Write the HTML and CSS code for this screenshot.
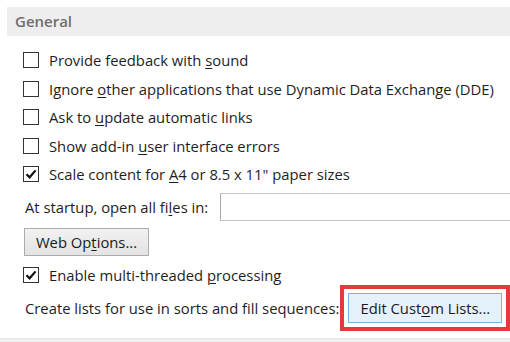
FILE: index.html
```html
<!DOCTYPE html>
<html>
<head>
<meta charset="utf-8">
<link rel="stylesheet" href="styles.css">
</head>
<body>
<div class="page">
  <div class="section-head">General</div>
  <div class="checks">
    <div class="row check-row"><span class="box"></span><span class="label">Provide feedback with <u>s</u>ound</span></div>
    <div class="row check-row"><span class="box"></span><span class="label">Ignore <u>o</u>ther applications that use Dynamic Data Exchange (DDE)</span></div>
    <div class="row check-row"><span class="box"></span><span class="label">Ask to <u>u</u>pdate automatic links</span></div>
    <div class="row check-row"><span class="box"></span><span class="label">Show add-in <u>u</u>ser interface errors</span></div>
    <div class="row check-row"><span class="box checked"><svg viewBox="0 0 14 14" width="14" height="14"><path d="M2.5 7.2 L5.6 10.3 L11.6 3.4" fill="none" stroke="#111" stroke-width="2.2"/></svg></span><span class="label">Scale content for <u>A</u>4 or 8.5 x 11" paper sizes</span></div>
  </div>
  <div class="row startup-row"><span class="plain">At startup, open all fi<u>l</u>es in:</span><span class="textbox"></span></div>
  <div class="btn-row"><span class="btn">Web Op<u>t</u>ions...</span></div>
  <div class="row check-row enable-row"><span class="box checked"><svg viewBox="0 0 14 14" width="14" height="14"><path d="M2.5 7.2 L5.6 10.3 L11.6 3.4" fill="none" stroke="#111" stroke-width="2.2"/></svg></span><span class="label">Enable multi-threaded <u>p</u>rocessing</span></div>
  <div class="row lists-row"><span class="plain">Create lists for use in sorts and fill sequences:</span><span class="btn btn-hot">Edit Cust<u>o</u>m Lists...</span></div>
  <div class="footer-band"></div>
</div>
</body>
</html>
```
FILE: styles.css
```css
html, body {
  margin: 0;
  padding: 0;
  background: #ffffff;
  overflow: hidden;
}
body {
  width: 510px;
  height: 342px;
  font-family: "Open Sans", "Noto Sans", "Liberation Sans", sans-serif;
  font-size: 14.8px;
  color: #1e1e1e;
}
.page {
  padding-top: 7px;
}
.section-head {
  margin-left: 7px;
  height: 29px;
  line-height: 29px;
  background: #eeeeee;
  padding-left: 8px;
  color: #6e6e6e;
  font-weight: 600;
  font-size: 15px;
}
.checks {
  margin-top: 9.75px;
}
.row {
  display: flex;
  align-items: center;
  white-space: nowrap;
}
.check-row {
  height: 28.5px;
  padding-left: 23px;
}
.box {
  box-sizing: border-box;
  width: 16px;
  height: 16px;
  border: 1px solid #333333;
  background: #ffffff;
  display: flex;
  align-items: center;
  justify-content: center;
  flex: none;
}
.label {
  margin-left: 10px;
}
u {
  text-decoration-thickness: 1px;
  text-underline-offset: 2px;
}
.startup-row {
  margin-top: 4.75px;
  height: 28px;
  padding-left: 25px;
}
.textbox {
  box-sizing: border-box;
  margin-left: auto;
  width: 300px;
  flex: none;
  height: 28px;
  border: 1px solid #c6c6c6;
  border-left-color: #a9a9a9;
  background: #ffffff;
  margin-right: -10px;
}
.startup-row .plain {
  width: 195px;
}
.btn-row {
  margin-top: 7px;
  padding-left: 24px;
  display: flex;
}
.btn {
  box-sizing: border-box;
  display: flex;
  align-items: center;
  justify-content: center;
  height: 28px;
  width: 125px;
  border: 1px solid #adadad;
  background: linear-gradient(#f1f1f1, #e3e3e3);
  color: #1a1a1a;
}
.enable-row {
  margin-top: 5px;
  height: 28px;
}
.lists-row {
  margin-top: 4px;
  height: 30px;
  padding-left: 25px;
}
.btn-hot {
  margin-left: 9px;
  width: 154px;
  height: 30px;
  border: 1px solid #7eb4ea;
  background: #e5f1fb;
  outline: 4px solid #e53a3c;
  outline-offset: 4px;
}
.footer-band {
  margin-top: 15px;
  height: 6px;
  background: #f0f0f0;
  border-top: 1px solid #e6e6e6;
}
```
